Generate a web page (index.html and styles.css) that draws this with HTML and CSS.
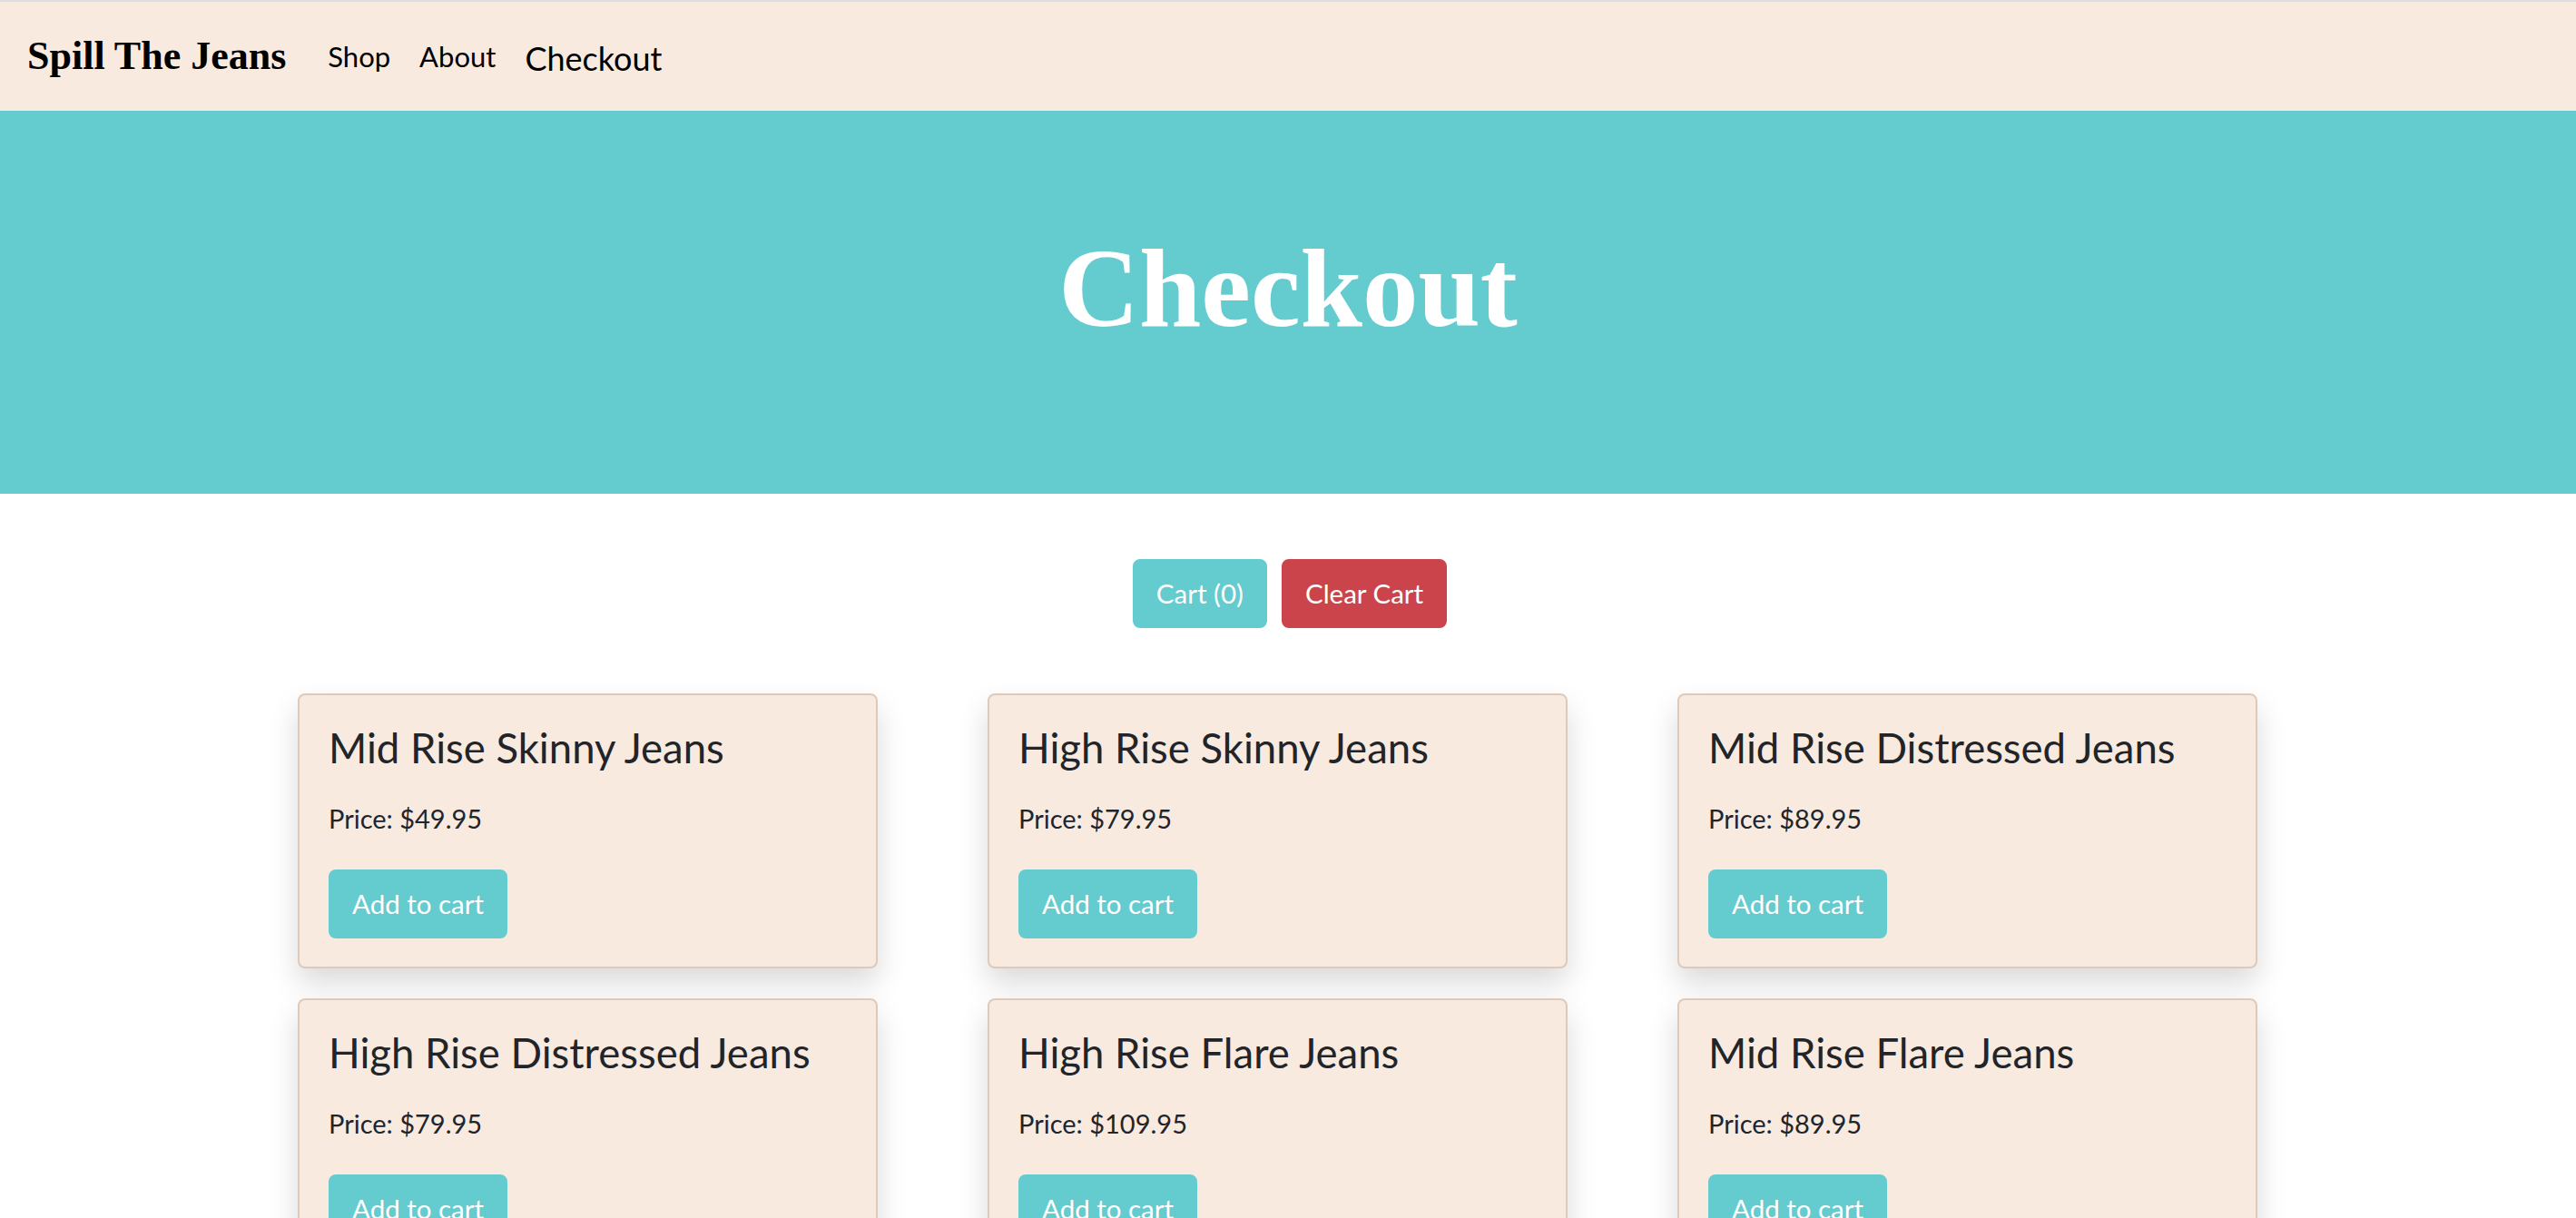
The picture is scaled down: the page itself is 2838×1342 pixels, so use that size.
FILE: index.html
```html
<!DOCTYPE html>
<html lang="en">
<head>
<meta charset="utf-8">
<title>Checkout - Spill The Jeans</title>
<link rel="stylesheet" href="styles.css">
</head>
<body>
<nav class="navbar">
  <a class="brand" href="#">Spill The Jeans</a>
  <ul class="nav-links">
    <li><a class="nav-link" href="#">Shop</a></li>
    <li><a class="nav-link" href="#">About</a></li>
    <li><a class="nav-link active" href="#">Checkout</a></li>
  </ul>
</nav>
<header class="hero">
  <h1 class="hero-title">Checkout</h1>
</header>
<main class="content">
  <div class="cart-actions">
    <button class="btn btn-teal">Cart (0)</button>
    <button class="btn btn-red">Clear Cart</button>
  </div>
  <div class="products">
    <div class="card">
      <h4 class="card-title">Mid Rise Skinny Jeans</h4>
      <p class="card-price">Price: $49.95</p>
      <button class="btn btn-teal">Add to cart</button>
    </div>
    <div class="card">
      <h4 class="card-title">High Rise Skinny Jeans</h4>
      <p class="card-price">Price: $79.95</p>
      <button class="btn btn-teal">Add to cart</button>
    </div>
    <div class="card">
      <h4 class="card-title">Mid Rise Distressed Jeans</h4>
      <p class="card-price">Price: $89.95</p>
      <button class="btn btn-teal">Add to cart</button>
    </div>
    <div class="card">
      <h4 class="card-title">High Rise Distressed Jeans</h4>
      <p class="card-price">Price: $79.95</p>
      <button class="btn btn-teal">Add to cart</button>
    </div>
    <div class="card">
      <h4 class="card-title">High Rise Flare Jeans</h4>
      <p class="card-price">Price: $109.95</p>
      <button class="btn btn-teal">Add to cart</button>
    </div>
    <div class="card">
      <h4 class="card-title">Mid Rise Flare Jeans</h4>
      <p class="card-price">Price: $89.95</p>
      <button class="btn btn-teal">Add to cart</button>
    </div>
  </div>
</main>
</body>
</html>
```

FILE: styles.css
```css
* { box-sizing: border-box; }

body {
  margin: 0;
  font-family: Lato, "Noto Sans", sans-serif;
  color: #212529;
  background: #ffffff;
}

.navbar {
  display: flex;
  align-items: center;
  height: 122px;
  padding: 0 30px;
  background: #f9eadf;
  border-top: 2px solid #dcdde0;
}

.brand {
  font-family: "Liberation Serif", "Times New Roman", serif;
  font-weight: 700;
  font-size: 44px;
  color: #000;
  text-decoration: none;
  margin-right: 30px;
  line-height: 1;
}

.nav-links {
  display: flex;
  align-items: center;
  list-style: none;
  margin: 0;
  padding: 0;
}

.nav-link {
  display: block;
  padding: 8px 16px;
  font-size: 31px;
  color: #000;
  text-decoration: none;
  line-height: 1.5;
}

.nav-link.active {
  font-size: 36px;
  margin-top: 4px;
}

.hero {
  height: 422px;
  background: #64cbcf;
  display: flex;
  align-items: center;
  justify-content: center;
  padding-bottom: 30px;
}

.hero-title {
  margin: 0;
  font-family: "Liberation Serif", "Times New Roman", serif;
  font-weight: 700;
  font-size: 123px;
  line-height: 1.2;
  color: #ffffff;
}

.content {
  padding-top: 72px;
}

.cart-actions {
  display: flex;
  justify-content: center;
  gap: 16px;
  padding-left: 4px;
}

.btn {
  height: 76px;
  padding: 12px 24px;
  border: 2px solid transparent;
  border-radius: 8px;
  font-family: Lato, "Noto Sans", sans-serif;
  font-size: 29.5px;
  line-height: 48px;
  color: #ffffff;
  cursor: pointer;
}

.btn-teal {
  background: #64cbcf;
  border-color: #64cbcf;
}

.btn-red {
  background: #cc444b;
  border-color: #cc444b;
}

.products {
  display: grid;
  grid-template-columns: repeat(3, 639px);
  column-gap: 121px;
  row-gap: 33px;
  justify-content: center;
  padding-right: 23px;
  margin-top: 72px;
}

.card {
  height: 303px;
  padding: 32px;
  background: #f9eae0;
  border: 2px solid #dccbbd;
  border-radius: 8px;
  box-shadow: 0 16px 32px rgba(0, 0, 0, 0.15);
  display: flex;
  flex-direction: column;
  align-items: flex-start;
}

.card-title {
  margin: 0;
  font-size: 45.5px;
  font-weight: 400;
  line-height: 52px;
}

.card-price {
  margin: 30px 0 34px;
  font-size: 29px;
  line-height: 1.5;
}
```
